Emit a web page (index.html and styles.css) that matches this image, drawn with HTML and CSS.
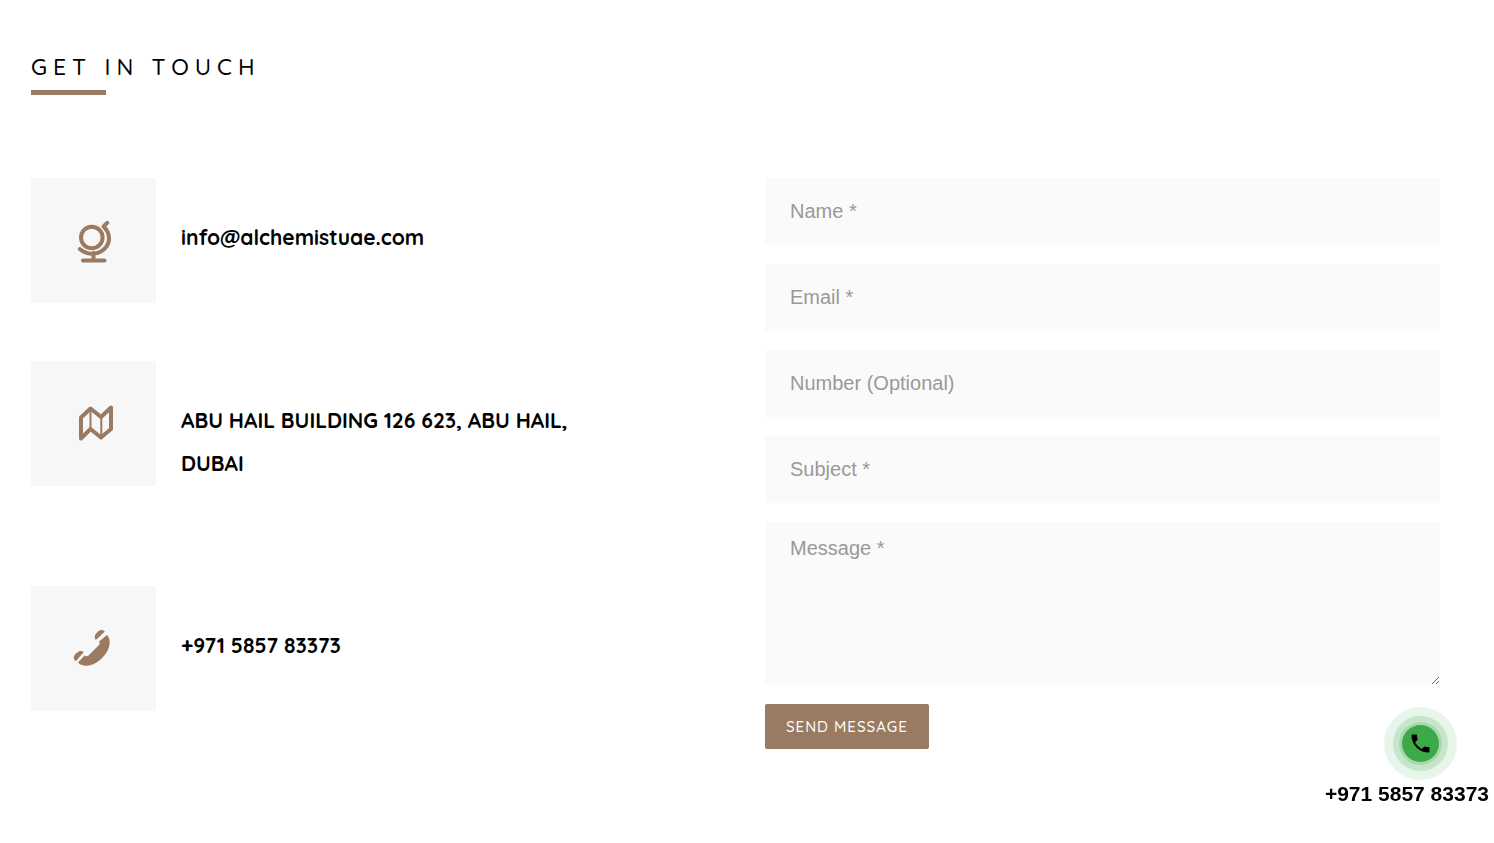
FILE: index.html
```html
<!DOCTYPE html>
<html lang="en">

<head>
    <meta charset="UTF-8">
    <meta name="viewport" content="width=device-width, initial-scale=1">
    <title>Get in touch</title>
    <link rel="stylesheet" href="styles.css">
</head>

<body>
    <section class="contact">
        <h2 class="title">GET IN TOUCH</h2>
        <div class="row">
            <div class="info">
                <div class="info-item">
                    <div class="info-icon">
                        <svg width="60" height="60" viewBox="-2 1 60 60" fill="none" stroke="#9a7a60" stroke-linecap="round" stroke-linejoin="round">
                            <circle cx="25.800" cy="27.500" r="10.800" stroke-width="4" />
                            <path d="M41.300 12.800L37.500 16.500C44.500 23 45 33 38 39.200C31 45.500 20.500 45 13.800 39" stroke-width="4" />
                            <path d="M27.500 43V50" stroke-width="4" />
                            <path d="M17 50.500H38.500" stroke-width="4" />
                        </svg>
                    </div>
                    <p class="info-text">info@alchemistuae.com</p>
                </div>
                <div class="info-item">
                    <div class="info-icon">
                        <svg width="60" height="60" viewBox="-2 -1 60 60" fill="none" stroke="#9a7a60" stroke-linecap="round" stroke-linejoin="round">
                            <path d="M15 22.500L24.500 13.500L35 22L45 12.500V34L35 42.500L24.500 34L15 43.500Z" stroke-width="4" />
                            <path d="M24.500 14V34M35.300 22V42" stroke-width="2" />
                        </svg>
                    </div>
                    <p class="info-text">ABU HAIL BUILDING 126 623, ABU HAIL,<br>DUBAI</p>
                </div>
                <div class="info-item">
                    <div class="info-icon">
                        <svg width="60" height="60" viewBox="-2 -1 60 60" fill="#9a7a60">
                            <path d="M41 15C44 18 44.500 23 42.500 28.500C39.500 36 32.500 42.500 25 45C20 46.700 15 45.500 12 42.500L18.500 35.500C20 36.500 21.500 36.500 22.500 35.500L33 25C34 24 34 23 33 21.500Z" />
                            <path d="M29.300 19.500C28 16 29.500 14 31.500 12C33.500 10 36 9 38.800 11.500L31 19Q30 20 29.300 19.500Z" />
                            <path d="M9.500 41C7 38.500 7.500 36 9.500 34C11.500 32 14.500 29.500 17.800 32L10.500 40.500Q10 41.200 9.500 41Z" />
                        </svg>
                    </div>
                    <p class="info-text">+971 5857 83373</p>
                </div>
            </div>

            <form class="form">
                <input class="field" type="text" name="name" placeholder="Name *" aria-label="Name">
                <input class="field" type="email" name="email" placeholder="Email *" aria-label="Email">
                <input class="field" type="tel" name="number" placeholder="Number (Optional)" aria-label="Number">
                <input class="field" type="text" name="subject" placeholder="Subject *" aria-label="Subject">
                <textarea class="field message" name="message" placeholder="Message *" aria-label="Message"></textarea>
                <button class="send" type="submit">SEND MESSAGE</button>
            </form>
        </div>
    </section>

    <!-- floating call button -->
    <a class="call" href="tel:+971585783373">
        <span class="call-circle">
            <svg width="24" height="24" viewBox="0.500 0.500 24 24" fill="#000">
                <path d="M6.620 10.790c1.440 2.830 3.760 5.140 6.590 6.590l2.200-2.200c.27-.27.67-.36 1.020-.24 1.120.37 2.330.57 3.570.57.55 0 1 .45 1 1V20c0 .55-.45 1-1 1-9.390 0-17-7.610-17-17 0-.55.45-1 1-1h3.500c.55 0 1 .45 1 1 0 1.250.2 2.450.57 3.570.11.35.03.74-.25 1.020l-2.200 2.200z" />
            </svg>
        </span>
        <span class="call-number">+971 5857 83373</span>
    </a>
</body>

</html>
```
FILE: styles.css
```css
* {
    box-sizing: border-box;
}

body {
    margin: 0;
    background: #fff;
    color: #000;
    font-family: Quicksand, Lato, sans-serif;
}

.contact {
    padding: 50px 54px 50px 31px;
}

.title {
    margin: 0 0 83px;
    font-size: 23px;
    font-weight: 500;
    line-height: 34px;
    letter-spacing: 6px;
}

.title::after {
    content: "";
    display: block;
    width: 75px;
    height: 5px;
    margin-top: 6px;
    background: #9a7a60;
}

.row {
    display: grid;
    grid-template-columns: 1fr 1fr;
    gap: 59px;
}

.info {
    display: flex;
    flex-direction: column;
    gap: 58px;
}

.info-item {
    display: flex;
    align-items: flex-start;
    gap: 25px;
}

.info-icon {
    display: flex;
    flex-shrink: 0;
    align-items: center;
    justify-content: center;
    width: 125px;
    height: 125px;
    background: #f7f7f7;
    border-radius: 2px;
}

.info-text {
    margin: 0;
    padding: 38px 0 43px;
    font-size: 21px;
    font-weight: 700;
    line-height: 43px;
}

.form {
    display: flex;
    flex-direction: column;
    align-items: flex-start;
    gap: 19px;
}

.field {
    display: block;
    width: 100%;
    height: 67px;
    padding: 0 25px;
    border: 0;
    border-radius: 2px;
    background: #fafafa;
    color: #000;
    font-family: "Liberation Sans", Arial, sans-serif;
    font-size: 20px;
}

.field::placeholder {
    color: #999;
}

.message {
    height: 163px;
    padding: 15px 25px;
    line-height: 23px;
    resize: vertical;
}

.send {
    height: 45px;
    padding: 0 21px;
    border: 0;
    border-radius: 2px;
    background: #9a7a60;
    color: #fff;
    font-family: inherit;
    font-size: 15px;
    font-weight: 500;
    letter-spacing: 1px;
    cursor: pointer;
}

.call {
    position: fixed;
    right: 5px;
    bottom: 37px;
    color: #000;
    text-decoration: none;
}

.call-circle {
    display: flex;
    align-items: center;
    justify-content: center;
    width: 37px;
    height: 37px;
    margin: 0 50px 20px auto;
    border-radius: 50%;
    background: #3daa49;
    box-shadow: 0 0 0 3px #a9d7ae, 0 0 0 9px #c5e6c9, 0 0 0 18px #e8f5ea;
}

.call-number {
    display: block;
    font-family: "Liberation Sans", Arial, sans-serif;
    font-size: 21px;
    font-weight: 700;
    line-height: 24px;
}
```
